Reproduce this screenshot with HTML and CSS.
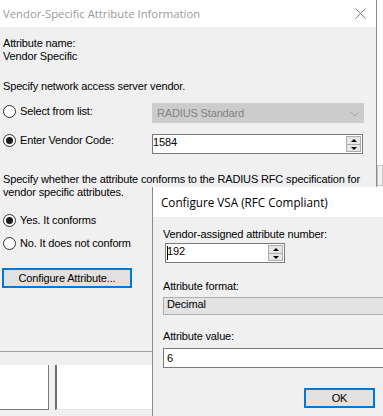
FILE: index.html
```html
<!DOCTYPE html>
<html>
<head>
<meta charset="utf-8">
<link rel="stylesheet" href="styles.css">
</head>
<body>
<div class="desk">
  <div class="thumb"></div>
  <div class="main">
    <div class="titlebar">
      <span class="title">Vendor-Specific Attribute Information</span>
      <svg class="close" width="11" height="11" viewBox="0 0 11 11"><path d="M0.5 0.5L10.5 10.5M10.5 0.5L0.5 10.5" stroke="#7a7a7a" stroke-width="1" fill="none"/></svg>
    </div>
    <div class="body">
      <div class="line">Attribute name:</div>
      <div class="line">Vendor Specific</div>
      <div class="line sect">Specify network access server vendor.</div>
      <div class="row r1">
        <label class="radio"><span class="circle"></span>Select from list:</label>
        <div class="combo"><span>RADIUS Standard</span><svg width="10" height="6" viewBox="0 0 10 6"><path d="M0.5 0.5L5 5L9.5 0.5" fill="none" stroke="#a8a8a8"/></svg></div>
      </div>
      <div class="row r2">
        <label class="radio"><span class="circle on"></span>Enter Vendor Code:</label>
        <div class="spin wide"><span class="val">1584</span><div class="spinbtns"><div class="sb up"></div><div class="sb down"></div></div></div>
      </div>
      <p class="para">Specify whether the attribute conforms to the RADIUS RFC specification for<br>vendor specific attributes.</p>
      <label class="radio yes"><span class="circle on"></span>Yes. It conforms</label>
      <label class="radio no"><span class="circle"></span>No. It does not conform</label>
      <button class="btn cfg">Configure Attribute...</button>
    </div>
    <div class="bottom">
      <div class="list l1"></div>
      <div class="list l2"></div>
    </div>
  </div>
  <div class="vsa">
    <div class="titlebar2"><span class="title2">Configure VSA (RFC Compliant)</span></div>
    <div class="content">
      <div class="line">Vendor-assigned attribute number:</div>
      <div class="spin small"><span class="caret"></span><span class="val">192</span><div class="spinbtns"><div class="sb up"></div><div class="sb down"></div></div></div>
      <div class="line lbl-format">Attribute format:</div>
      <div class="ro">Decimal</div>
      <div class="line lbl-value">Attribute value:</div>
      <div class="tb">6</div>
      <button class="btn ok">OK</button>
    </div>
  </div>
</div>
</body>
</html>
```
FILE: styles.css
```css
* { box-sizing: border-box; }
html, body { margin: 0; padding: 0; }
body {
  width: 383px; height: 416px; overflow: hidden; background: #fff;
  font-family: "Liberation Sans", Arial, sans-serif; font-size: 11px;
  letter-spacing: -0.15px; color: #000;
}
.desk { position: relative; width: 383px; height: 416px; }
.thumb {
  position: absolute; left: 377px; top: 165px; width: 6px; height: 21px;
  border: 1px solid #c4c4c4; background: #f4f4f4;
}
.main {
  width: 377px; height: 416px; background: #f0f0f0;
  border-right: 1px solid #8c8c8c; display: flex; flex-direction: column;
}
.titlebar {
  flex: none; height: 27px; background: #fff; display: flex; align-items: center;
  justify-content: space-between; padding: 0 10px 0 3px;
}
.title { font-family: "Open Sans", sans-serif; font-size: 11.3px; letter-spacing: 0; color: #9a9a9a; }
.close { display: block; }
.body { flex: none; height: 324px; padding: 10px 0 0 3px; }
.line { height: 13px; line-height: 13px; white-space: nowrap; }
.sect { margin-top: 17px; }
.row { display: flex; height: 20px; margin-top: 10px; }
.row.r2 { margin-top: 11px; }
.radio { display: flex; align-items: center; height: 13px; line-height: 13px; white-space: nowrap; }
.row .radio { width: 149px; flex: none; }
.r1 .radio { margin-top: 2px; }
.circle {
  width: 13px; height: 13px; border: 1px solid #333; border-radius: 50%; background: #fff;
  margin-right: 4px; flex: none; display: flex; align-items: center; justify-content: center;
}
.circle.on::after { content: ""; width: 7px; height: 7px; border-radius: 50%; background: #1a1a1a; }
.combo {
  width: 212px; height: 20px; background: #cccccc; border: 1px solid #cccccc; color: #838383;
  display: flex; align-items: center; justify-content: space-between; padding: 0 3px 0 4px;
}
.combo svg { display: block; margin-top: 1px; }
.spin {
  height: 20px; background: #fff; border: 1px solid #7a7a7a; display: flex; align-items: flex-start;
  line-height: 13px; padding: 0 1px 0 0;
}
.spin.wide { width: 211px; }
.spin .val { flex: 1; padding-top: 1px; }
.spinbtns { width: 15px; height: 16px; margin-top: 1px; display: flex; flex-direction: column; flex: none; }
.sb {
  height: 8px; background: #e6e6e6; border: 1px solid #adadad; display: flex; align-items: center; justify-content: center;
}
.sb.up { border-bottom-width: 0; }
.sb.up::after { content: ""; border-left: 3px solid transparent; border-right: 3px solid transparent; border-bottom: 3px solid #000; }
.sb.down::after { content: ""; border-left: 3px solid transparent; border-right: 3px solid transparent; border-top: 3px solid #000; }
.para { margin: 19px 0 0 0; line-height: 13px; white-space: nowrap; }
.yes { margin-top: 15px; }
.no { margin-top: 10px; }
.btn {
  display: flex; align-items: center; justify-content: center; padding: 0;
  font: inherit; letter-spacing: inherit; color: #000; background: #e1e1e1;
  border: 2px solid #0078d7; height: 20px;
}
.cfg { margin: 18px 0 0 -1px; width: 130px; }
.bottom { flex: 1; border-top: 1px solid #a0a0a0; padding-top: 13px; display: flex; align-items: flex-start; }
.list { height: 45px; background: #fff; }
.l1 { width: 49px; border-right: 1px solid #7a7a7a; border-bottom: 1px solid #7a7a7a; }
.l2 { flex: 1; margin-left: 6px; border-left: 2px solid #6d6d6d; border-bottom: 1px solid #e3e3e3; }
.vsa {
  position: absolute; left: 152px; top: 187px; width: 240px; height: 229px;
  background: #f0f0f0; border-left: 1px solid #8c8c8c;
}
.titlebar2 { height: 30px; background: #fff; display: flex; align-items: center; padding-left: 8px; }
.title2 { font-family: "Open Sans", sans-serif; font-size: 11.7px; letter-spacing: 0; color: #000; }
.content { padding: 11px 0 0 10px; }
.spin.small { width: 120px; margin: 2px 0 0 2px; position: relative; }
.caret { position: absolute; left: 1px; top: 2px; width: 1px; height: 14px; background: #000; }
.spin.small .val { padding-left: 1px; }
.lbl-format { margin-top: 17px; }
.ro {
  margin-top: 4px; height: 18px; width: 230px; background: #e3e3e3; border: 1px solid #adadad;
  line-height: 13px; padding: 0 0 0 3px;
}
.lbl-value { margin-top: 15px; }
.tb {
  margin-top: 5px; height: 20px; width: 230px; background: #fff; border: 1px solid #7a7a7a;
  display: flex; align-items: center; padding-left: 3px;
}
.ok { margin: 20px 0 0 141px; width: 71px; }
```
